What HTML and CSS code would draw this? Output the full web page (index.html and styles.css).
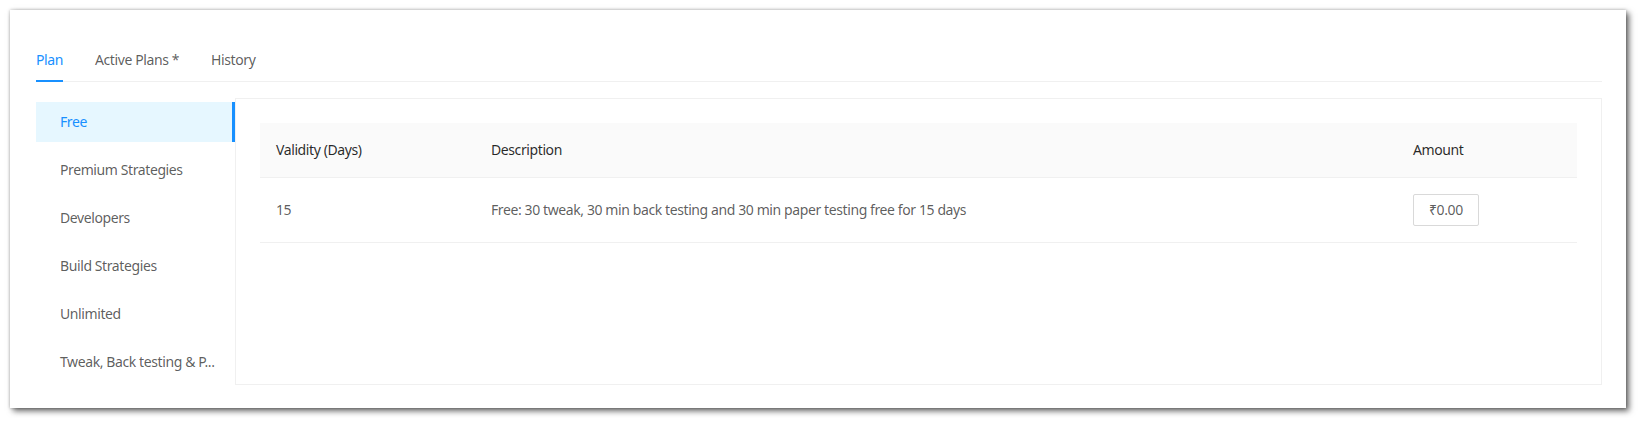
FILE: index.html
```html
<!DOCTYPE html>
<html>
<head>
<meta charset="utf-8">
<link rel="stylesheet" href="styles.css">
</head>
<body>
<div class="window">
  <div class="tabs">
    <div class="tab active">Plan</div>
    <div class="tab">Active Plans *</div>
    <div class="tab">History</div>
  </div>
  <div class="body">
    <ul class="menu">
      <li class="item selected">Free</li>
      <li class="item">Premium Strategies</li>
      <li class="item">Developers</li>
      <li class="item">Build Strategies</li>
      <li class="item">Unlimited</li>
      <li class="item">Tweak, Back testing &amp; P...</li>
    </ul>
    <div class="card">
      <table class="table">
        <colgroup>
          <col class="c1"><col class="c2"><col class="c3">
        </colgroup>
        <thead>
          <tr><th>Validity (Days)</th><th>Description</th><th>Amount</th></tr>
        </thead>
        <tbody>
          <tr>
            <td>15</td>
            <td>Free: 30 tweak, 30 min back testing and 30 min paper testing free for 15 days</td>
            <td><span class="amount">₹0.00</span></td>
          </tr>
        </tbody>
      </table>
    </div>
  </div>
</div>
</body>
</html>
```
FILE: styles.css
```css
* { box-sizing: border-box; }
html, body { margin: 0; padding: 0; background: #fff; }
body {
  font-family: "Noto Sans", "Open Sans", sans-serif;
  font-size: 14px;
  line-height: 22px;
  letter-spacing: -0.4px;
  color: rgba(0,0,0,0.65);
}
.window {
  margin: 10px;
  width: 1616px;
  height: 398px;
  background: #fff;
  box-shadow: 3px 3px 6px rgba(0,0,0,0.6), 0 0 3px rgba(0,0,0,0.25);
  padding: 26px 24px 0 26px;
}
.tabs {
  display: flex;
  gap: 32px;
  border-bottom: 1px solid #f0f0f0;
  height: 46px;
}
.tab {
  padding: 13px 0 10px;
  color: rgba(0,0,0,0.65);
  position: relative;
}
.tab.active { color: #1890ff; }
.tab.active::after {
  content: "";
  position: absolute;
  left: 0; right: 0; bottom: -1px;
  height: 2px;
  background: #1890ff;
}
.body {
  display: flex;
  margin-top: 16px;
}
.menu {
  list-style: none;
  margin: 0;
  padding: 0;
  width: 199px;
  flex: none;
}
.item {
  height: 40px;
  line-height: 40px;
  margin: 4px 0 8px;
  padding: 0 16px 0 24px;
  white-space: nowrap;
  position: relative;
}
.item.selected {
  background: #e6f7ff;
  color: #1890ff;
}
.item.selected::after {
  content: "";
  position: absolute;
  right: 0; top: 0; bottom: 0;
  width: 3px;
  background: #1890ff;
}
.card {
  flex: 1;
  height: 287px;
  border: 1px solid #f0f0f0;
  padding: 24px;
}
.table {
  width: 100%;
  border-collapse: collapse;
  table-layout: fixed;
}
.c1 { width: 215px; }
.c3 { width: 180px; }
.table th {
  background: #fafafa;
  color: rgba(0,0,0,0.85);
  font-weight: 400;
  text-align: left;
  padding: 16px;
  border-bottom: 1px solid #f0f0f0;
}
.table td {
  padding: 16px;
  border-bottom: 1px solid #f0f0f0;
  height: 65px;
}
.amount {
  display: inline-block;
  height: 32px;
  line-height: 30px;
  padding: 0 15px;
  border: 1px solid #d9d9d9;
  border-radius: 2px;
  color: rgba(0,0,0,0.65);
}
```
